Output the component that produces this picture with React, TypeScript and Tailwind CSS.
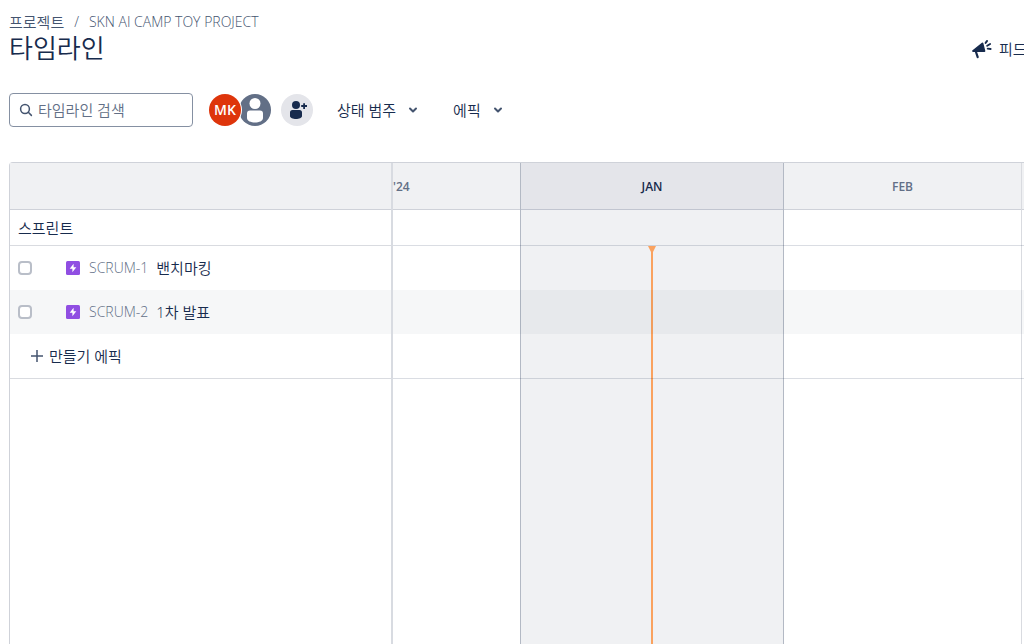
import { useState } from "react";

const epics = [
  { key: "SCRUM-1", name: "밴치마킹", row: "" },
  { key: "SCRUM-2", name: "1차 발표", row: "bg-[#091e42]/[0.035]" },
];

function SearchIcon() {
  return (
    <svg viewBox="0 0 16 16" className="size-4 shrink-0" fill="none" stroke="#44546f" strokeWidth="1.5" strokeLinecap="round" aria-hidden="true">
      <circle cx="7" cy="7" r="4.4" />
      <path d="M10.3 10.3 13.4 13.4" />
    </svg>
  );
}

function PersonIcon() {
  return (
    <svg viewBox="0 0 32 32" className="size-8" aria-hidden="true">
      <circle cx="16" cy="16" r="16" fill="#626f86" />
      <circle cx="16" cy="9.5" r="5.5" fill="#fff" />
      <path d="M8 19.5a3 3 0 0 1 3-3h10a3 3 0 0 1 3 3v4.5c0 3-4 4.5-8 4.5s-8-1.500-8-4.5z" fill="#fff" />
    </svg>
  );
}

function InviteIcon() {
  return (
    <svg viewBox="0 0 32 32" className="size-8" fill="#172b4d" aria-hidden="true">
      <circle cx="15" cy="11" r="4" />
      <path d="M9 18.5a2.5 2.5 0 0 1 2.5-2.5h7a2.500 2.5 0 0 1 2.5 2.5V22c0 2-3 3-6 3s-6-1-6-3z" />
      <path d="M22.200 9.200h1.800v1.900h2v1.800h-2V15h-1.800v-2.100h-2v-1.800h2z" />
    </svg>
  );
}

function MegaphoneIcon() {
  return (
    <svg viewBox="0 0 24 24" className="size-6" fill="#172b4d" aria-hidden="true">
      <path d="M2.200 13.600 11.900 5.700q1-.7 1.400.4l2 7.700q.2 1.200-.9 1.200H3.200q-1.700-.1-1-1.400z" />
      <path d="m6 15 1.700 5.200" stroke="#172b4d" strokeWidth="2.200" strokeLinecap="round" />
      <path d="m15.600 5.900 1.500-2M17.200 8.700l2.900-1.700M17.700 11.600l2.900.4" stroke="#172b4d" strokeWidth="1.900" strokeLinecap="round" />
    </svg>
  );
}

function ChevronIcon() {
  return (
    <svg viewBox="0 0 10 10" className="size-[10px]" fill="none" stroke="#44546f" strokeWidth="2" strokeLinecap="round" strokeLinejoin="round" aria-hidden="true">
      <path d="m2 3.500 3 3 3-3" />
    </svg>
  );
}

function EpicIcon() {
  return (
    <svg viewBox="0 0 14 14" className="size-[14px]" aria-hidden="true">
      <rect width="14" height="14" rx="1.500" fill="#904ee2" />
      <path d="M7.600 2.800v3.400h2.700L6.400 11.300V7.800H3.700z" fill="#fff" />
    </svg>
  );
}

export default function App() {
  const [query, setQuery] = useState("");
  return (
    <div className="flex min-h-screen flex-col overflow-hidden bg-white pl-[9px] font-['Open_Sans','Noto_Sans_CJK_KR',sans-serif] text-[15px] leading-5 font-[350] text-[#172b4d]">
      <header className="flex items-center justify-between pt-3">
        <div>
          <nav aria-label="Breadcrumb" className="flex gap-[10px] text-[#44546f]">
            <a href="#projects">프로젝트</a>
            <span className="text-sm leading-5">/</span>
            <a href="#project" className="text-sm leading-5">SKN AI CAMP TOY PROJECT</a>
          </nav>
          <h1 className="text-[26px] leading-8">타임라인</h1>
        </div>
        <button type="button" className="mt-[22px] flex w-[54px] items-center gap-[5px] overflow-hidden whitespace-nowrap">
          <span className="shrink-0"><MegaphoneIcon /></span>
          피드
        </button>
      </header>

      <div className="mt-[29px] flex items-center">
        <label className="flex h-[34px] w-[184px] items-center gap-1 rounded-[4px] border border-[#8590a2] px-2">
          <SearchIcon />
          <input
            type="text"
            aria-label="타임라인 검색"
            placeholder="타임라인 검색"
            value={query}
            onChange={(e) => setQuery(e.target.value)}
            className="w-full min-w-0 bg-transparent outline-none placeholder:text-[#626f86]"
          />
        </label>
        <div className="ml-4 flex -space-x-[2px]">
          <button type="button" className="z-10 flex size-8 items-center justify-center rounded-full bg-[#de350b] text-sm font-semibold text-white ring-1 ring-white">MK</button>
          <button type="button" aria-label="담당자"><PersonIcon /></button>
        </div>
        <button type="button" aria-label="사용자 추가" className="ml-[10px] rounded-full bg-[#e4e5ea]"><InviteIcon /></button>
        <button type="button" className="ml-6 flex items-center gap-3">상태 범주<ChevronIcon /></button>
        <button type="button" className="ml-[35px] flex items-center gap-3">에픽<ChevronIcon /></button>
      </div>

      <main className="mt-[35px] grid flex-1 grid-cols-[383px_1fr] rounded-tl-[4px] border-t border-l border-[#cfd2d9]">
        <section className="border-r-2 border-[#d8dbe1]">
          <div className="h-[47px] border-b border-[#cfd2d9] bg-[#f0f1f3]" />
          <h2 className="flex h-9 items-center border-b border-[#d9dbe0] pl-2">스프린트</h2>
          <ul>
            {epics.map((epic) => (
              <li key={epic.key} className={`flex h-11 items-center pl-2 ${epic.row}`}>
                <input
                  type="checkbox"
                  aria-label={epic.name}
                  className="size-[14px] appearance-none rounded-[4px] border-2 border-[#b9bec8] bg-white checked:bg-[#0c66e4]"
                />
                <span className="ml-[34px]"><EpicIcon /></span>
                <a href={`#${epic.key}`} className="ml-[9px] text-sm text-[#626f86]">{epic.key}</a>
                <span className="ml-2">{epic.name}</span>
              </li>
            ))}
          </ul>
          <button type="button" className="flex h-[45px] w-full items-center gap-[6px] border-b border-[#d9dbe0] pl-[21px]">
            <svg viewBox="0 0 12 12" className="size-3" stroke="#44546f" strokeWidth="1.500" aria-hidden="true">
              <path d="M6 0v12M0 6h12" />
            </svg>
            만들기 에픽
          </button>
        </section>

        <section aria-label="월별 일정" className="grid overflow-hidden text-xs font-semibold text-[#626f86]">
          <div className="col-start-1 row-start-1 flex">
            <div className="w-32 border-r border-[#b3b9c4]">
              <div className="flex h-[47px] items-center border-b border-[#cfd2d9] bg-[#f0f1f3] pt-px">'24</div>
            </div>
            <div className="flex w-[263px] flex-col border-r border-[#b3b9c4] bg-[#f0f1f3]">
              <div className="flex h-[47px] items-center justify-center border-b border-[#c1c5d0] bg-[#e4e5ea] pt-px text-[#172b4d]">JAN</div>
              <div className="mt-9 flex flex-1 flex-col items-center">
                <svg viewBox="0 0 8 6" className="h-[6px] w-2" fill="#faa25f" aria-hidden="true">
                  <path d="M0 0h8L5 6H3z" />
                </svg>
                <div className="w-[2px] flex-1 bg-[#faa25f]" />
              </div>
            </div>
            <div className="w-[238px] border-r border-[#d9dbe0]">
              <div className="flex h-[47px] items-center justify-center border-b border-[#cfd2d9] bg-[#f0f1f3] pt-px">FEB</div>
            </div>
            <div className="flex-1">
              <div className="h-[47px] border-b border-[#cfd2d9] bg-[#f0f1f3]" />
            </div>
          </div>
          <div className="pointer-events-none col-start-1 row-start-1 pt-[47px]">
            <div className="h-9 border-b border-[#091e42]/15" />
            {epics.map((epic) => (
              <div key={epic.key} className={`h-11 ${epic.row}`} />
            ))}
            <div className="h-[45px] border-b border-[#091e42]/15" />
          </div>
        </section>
      </main>
    </div>
  );
}
